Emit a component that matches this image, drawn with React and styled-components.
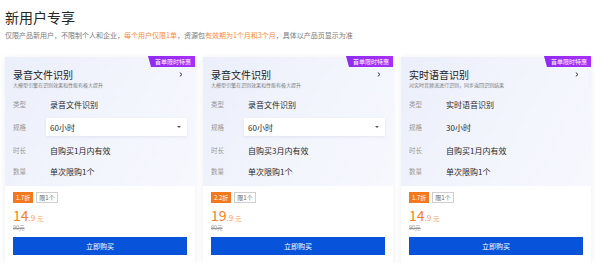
import styled, { createGlobalStyle } from "styled-components";

const GlobalStyle = createGlobalStyle`
  html, body {
    margin: 0;
    padding: 0;
    background: #ffffff;
    font-family: "Noto Sans CJK SC", "Noto Sans", "Liberation Sans", sans-serif;
    color: #222;
  }
`;

const Page = styled.div`
  padding: 8px 9px 0 5px;
`;

const Title = styled.h1`
  margin: 0;
  font-size: 14px;
  line-height: 18px;
  font-weight: 400;
  color: #262626;
`;

const Intro = styled.p`
  margin: 4px 0 0;
  font-size: 7px;
  line-height: 10px;
  color: #7a7a7a;
`;

const Hl = styled.span`
  color: #ff8a3d;
`;

const Cards = styled.div`
  display: grid;
  grid-template-columns: repeat(3, 1fr);
  gap: 8px;
  margin-top: 17px;
`;

const Card = styled.div`
  position: relative;
  display: flex;
  flex-direction: column;
  background: #fff;
  box-shadow: 0 1px 6px rgba(30, 40, 80, 0.08);
`;

const Badge = styled.div`
  position: absolute;
  top: -1px;
  right: 0;
  height: 11px;
  padding: 0 4px 0 7px;
  font-size: 6px;
  line-height: 11px;
  color: #fff;
  background: linear-gradient(90deg, #8f2af2, #a92ff8);
  clip-path: polygon(0 0, 100% 0, 100% 100%, 3px 100%);
`;

const Head = styled.div`
  padding: 11px 8px 5px;
  background: linear-gradient(120deg, #ebeffb 0%, #f3f5fd 55%, #f7f8fe 100%);
`;

const NameRow = styled.div`
  display: flex;
  align-items: center;
  justify-content: space-between;
`;

const Name = styled.div`
  font-size: 10px;
  line-height: 13px;
  font-weight: 400;
  color: #1c1c1c;
`;

const Chevron = styled.svg`
  width: 4px;
  height: 5px;
  margin-right: 4px;
`;

const Desc = styled.div`
  font-size: 5px;
  line-height: 8px;
  color: #7a7a7a;
`;

const Rows = styled.div`
  display: flex;
  flex-direction: column;
  gap: 1px;
  margin-top: 5px;
`;

const Row = styled.div`
  display: grid;
  grid-template-columns: 33px 1fr;
  align-items: center;
  height: ${(p) => (p.$tall ? 24 : 20)}px;
`;

const Label = styled.span`
  font-size: 6.5px;
  color: #999;
`;

const Value = styled.span`
  font-size: 8px;
  color: #2a2a2a;
  padding-left: 4px;
`;

const Select = styled.div`
  display: flex;
  align-items: center;
  justify-content: space-between;
  height: 18px;
  padding: 0 6px 0 4px;
  background: #fff;
  box-shadow: 0 1px 3px rgba(30, 40, 80, 0.08);
  font-size: 8px;
  color: #2a2a2a;
`;

const Caret = styled.span`
  width: 0;
  height: 0;
  border-left: 2px solid transparent;
  border-right: 2px solid transparent;
  border-top: 2px solid #555;
`;

const Foot = styled.div`
  padding: 6px 8px 8px;
  background: #fff;
`;

const Tags = styled.div`
  display: flex;
  gap: 3px;
  height: 11px;
`;

const Tag = styled.span`
  display: inline-flex;
  align-items: center;
  padding: 0 2px;
  font-size: 6px;
  line-height: 1;
  border: 1px solid ${(p) => (p.$hot ? "#f5781c" : "#cfcfcf")};
  background: ${(p) => (p.$hot ? "#f5781c" : "#fff")};
  color: ${(p) => (p.$hot ? "#fff" : "#666")};
`;

const Price = styled.div`
  margin-top: 4px;
  height: 17px;
  display: flex;
  align-items: baseline;
  color: #ff7d1d;
`;

const Big = styled.span`
  font-size: 14px;
  line-height: 17px;
`;

const Small = styled.span`
  font-size: 8px;
  color: #ff9a52;
`;

const Unit = styled.span`
  font-size: 6px;
  margin-left: 2px;
  color: #ff9a52;
`;

const Origin = styled.div`
  font-size: 5.5px;
  line-height: 9px;
  color: #999;
  text-decoration: line-through;
`;

const BuyButton = styled.button`
  display: block;
  width: 100%;
  height: 18px;
  margin-top: 4px;
  border: none;
  background: #0753d9;
  color: #fff;
  font-family: inherit;
  font-size: 7px;
  cursor: pointer;
`;

const products = [
  {
    name: "录音文件识别",
    desc: "大模型引擎在识别效果和性能有极大提升",
    type: "录音文件识别",
    spec: "60小时",
    select: true,
    period: "自购买1月内有效",
    discount: "1.7折",
    price: "14",
    cents: ".9",
  },
  {
    name: "录音文件识别",
    desc: "大模型引擎在识别效果和性能有极大提升",
    type: "录音文件识别",
    spec: "60小时",
    select: true,
    period: "自购买3月内有效",
    discount: "2.2折",
    price: "19",
    cents: ".9",
  },
  {
    name: "实时语音识别",
    desc: "对实时音频流进行识别，同步返回识别结果",
    type: "实时语音识别",
    spec: "30小时",
    select: false,
    period: "自购买1月内有效",
    discount: "1.7折",
    price: "14",
    cents: ".9",
  },
];

function ProductCard({ p }) {
  return (
    <Card>
      <Badge>首单限时特惠</Badge>
      <Head>
        <NameRow>
          <Name>{p.name}</Name>
          <Chevron viewBox="0 0 4 5">
            <path d="M0.8 0.6 L3 2.5 L0.8 4.4" fill="none" stroke="#333" strokeWidth="1" />
          </Chevron>
        </NameRow>
        <Desc>{p.desc}</Desc>
        <Rows>
          <Row>
            <Label>类型</Label>
            <Value>{p.type}</Value>
          </Row>
          <Row $tall>
            <Label>规格</Label>
            {p.select ? (
              <Select>
                {p.spec}
                <Caret />
              </Select>
            ) : (
              <Value>{p.spec}</Value>
            )}
          </Row>
          <Row>
            <Label>时长</Label>
            <Value>{p.period}</Value>
          </Row>
          <Row>
            <Label>数量</Label>
            <Value>单次限购1个</Value>
          </Row>
        </Rows>
      </Head>
      <Foot>
        <Tags>
          <Tag $hot>{p.discount}</Tag>
          <Tag>限1个</Tag>
        </Tags>
        <Price>
          <Big>{p.price}</Big>
          <Small>{p.cents}</Small>
          <Unit>元</Unit>
        </Price>
        <Origin>90元</Origin>
        <BuyButton>立即购买</BuyButton>
      </Foot>
    </Card>
  );
}

export default function App() {
  return (
    <>
      <GlobalStyle />
      <Page>
        <Title>新用户专享</Title>
        <Intro>
          仅限产品新用户，不限制个人和企业，<Hl>每个用户仅限1单</Hl>，资源包
          <Hl>有效期为1个月和3个月</Hl>，具体以产品页显示为准
        </Intro>
        <Cards>
          {products.map((p, i) => (
            <ProductCard key={i} p={p} />
          ))}
        </Cards>
      </Page>
    </>
  );
}
